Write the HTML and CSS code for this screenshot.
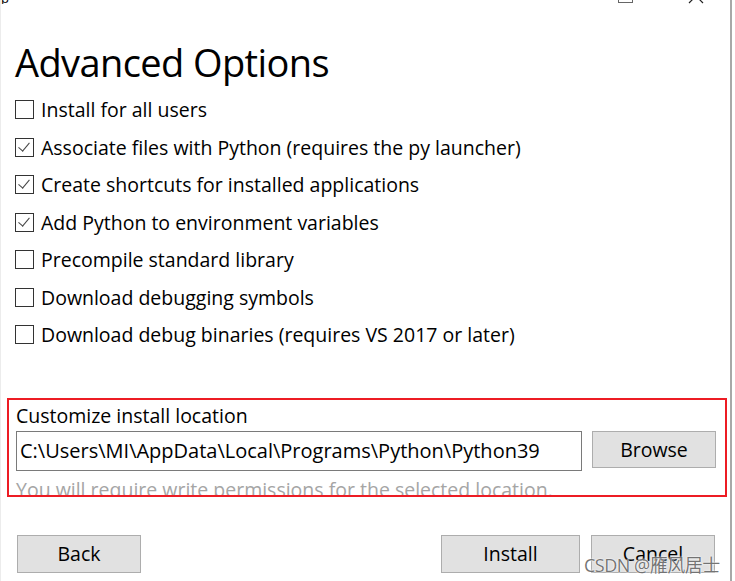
FILE: index.html
```html
<!DOCTYPE html>
<html lang="en">
  <head>
    <meta charset="UTF-8" />
    <title>Python Setup - Advanced Options</title>
    <link rel="stylesheet" href="styles.css">
  </head>
  <body>
    <div class="window">
      <div class="titlebar">
        <span class="title-text">Setup</span>
        <span class="ctl-max"></span>
        <svg class="ctl-close" width="16" height="16" viewBox="0 0 16 16">
          <path d="M1 1 L15 15 M15 1 L1 15" stroke="#222" stroke-width="1.2" fill="none" />
        </svg>
      </div>

      <div class="content">
        <h1>Advanced Options</h1>

        <ul class="options">
          <li><span class="box"></span>Install for all users</li>
          <li><span class="box checked"></span>Associate files with Python (requires the py launcher)</li>
          <li><span class="box checked"></span>Create shortcuts for installed applications</li>
          <li><span class="box checked"></span>Add Python to environment variables</li>
          <li><span class="box"></span>Precompile standard library</li>
          <li><span class="box"></span>Download debugging symbols</li>
          <li><span class="box"></span>Download debug binaries (requires VS 2017 or later)</li>
        </ul>

        <div class="location">
          <div class="location-label">Customize install location</div>
          <div class="location-row">
            <div class="path-input">C:\Users\MI\AppData\Local\Programs\Python\Python39</div>
            <button class="btn browse">Browse</button>
          </div>
          <div class="hint">You will require write permissions for the selected location.</div>
        </div>

        <div class="footer">
          <button class="btn back">Back</button>
          <button class="btn install">Install</button>
          <button class="btn cancel">Cancel</button>
        </div>
      </div>

      <div class="watermark">CSDN @雁风居士</div>
    </div>
  </body>
</html>
```

FILE: styles.css
```css
body {
  margin: 0;
  background: #ffffff;
  font-family: "Open Sans", "Noto Sans", "Noto Sans CJK SC", sans-serif;
  color: #000000;
  overflow: hidden;
}

.window {
  position: relative;
  width: 732px;
  height: 581px;
  border-right: 2px solid #a8a8a8;
  border-left: 1px solid #ececec;
  box-sizing: border-box;
}

/* title bar, mostly scrolled off the top */
.titlebar {
  height: 4px;
  overflow: hidden;
  display: flex;
  align-items: flex-end;
}

.title-text {
  font-size: 13px;
  line-height: 13px;
  margin-left: -27px;
  margin-bottom: -1px;
  color: #000;
}

.ctl-max {
  width: 13px;
  height: 13px;
  border: 1px solid #666;
  margin-left: auto;
  margin-bottom: 1px;
}

.ctl-close {
  margin-left: 55px;
  margin-right: 26px;
}

.content {
  padding-left: 14px;
}

h1 {
  margin: 35px 0 0 0;
  font-size: 38px;
  font-weight: 400;
  line-height: 46px;
  letter-spacing: -0.6px;
}

.options {
  list-style: none;
  margin: 6px 0 0 0;
  padding: 0;
}

.options li {
  display: flex;
  align-items: center;
  height: 37.5px;
  font-size: 19.5px;
}

.box {
  width: 17px;
  height: 17px;
  border: 1px solid #333333;
  margin-right: 7px;
  position: relative;
  flex: none;
}

.box.checked::after {
  content: "";
  position: absolute;
  left: 5px;
  top: 1px;
  width: 5px;
  height: 10px;
  border-right: 1.5px solid #444;
  border-bottom: 1.5px solid #444;
  transform: rotate(40deg);
}

.location {
  margin: 44px 0 0 -8px;
  width: 720px;
  height: 99px;
  border: 2px solid #ed1c24;
  box-sizing: border-box;
  padding: 5px 9px 0 7px;
  overflow: hidden;
}

.location-label {
  font-size: 19.5px;
  line-height: 22px;
}

.location-row {
  display: flex;
  gap: 10px;
  margin-top: 4px;
  align-items: flex-start;
}

.path-input {
  width: 566px;
  height: 40px;
  border: 1px solid #7a7a7a;
  box-sizing: border-box;
  font-size: 20px;
  line-height: 38px;
  padding-left: 3px;
}

.btn {
  font-family: inherit;
  background: #e1e1e1;
  border: 1px solid #adadad;
  color: #000;
  font-size: 19.5px;
  padding: 0;
  height: 37px;
  box-sizing: border-box;
}

.browse {
  width: 124px;
}

.hint {
  font-size: 19.5px;
  color: #a5a5a5;
  margin-top: 5px;
}

.footer {
  display: flex;
  margin-top: 38px;
  padding-left: 2px;
}

.back {
  width: 124px;
  height: 38px;
}

.install {
  width: 139px;
  height: 38px;
  margin-left: auto;
}

.cancel {
  width: 124px;
  height: 38px;
  margin-left: 11px;
  margin-right: 15px;
}

.watermark {
  position: absolute;
  left: 583px;
  top: 551px;
  font-size: 18px;
  color: rgba(70, 70, 70, 0.75);
  text-shadow: 0 0 2px #fff, 0 0 1px #fff;
  letter-spacing: -0.5px;
}
```
